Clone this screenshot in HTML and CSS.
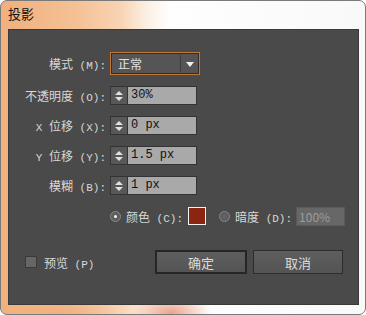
FILE: index.html
```html
<!DOCTYPE html>
<html lang="zh-CN">
<head>
    <meta charset="UTF-8">
    <title>投影</title>
    <link rel="stylesheet" href="styles.css">
</head>
<body>
    <div class="window">
        <div class="titlebar">投影</div>
        <div class="panel">
            <div class="form">
                <label class="label">模式<span class="key"> (M):</span></label>
                <div class="select">
                    <span class="select-value">正常</span>
                    <span class="select-arrow"></span>
                </div>

                <label class="label">不透明度<span class="key"> (O):</span></label>
                <div class="spin">
                    <span class="spin-btn"><i class="up"></i><i class="down"></i></span>
                    <span class="spin-value">30%</span>
                </div>

                <label class="label"><span class="key">X </span>位移<span class="key"> (X):</span></label>
                <div class="spin">
                    <span class="spin-btn"><i class="up"></i><i class="down"></i></span>
                    <span class="spin-value">0 px</span>
                </div>

                <label class="label"><span class="key">Y </span>位移<span class="key"> (Y):</span></label>
                <div class="spin">
                    <span class="spin-btn"><i class="up"></i><i class="down"></i></span>
                    <span class="spin-value">1.5 px</span>
                </div>

                <label class="label">模糊<span class="key"> (B):</span></label>
                <div class="spin">
                    <span class="spin-btn"><i class="up"></i><i class="down"></i></span>
                    <span class="spin-value">1 px</span>
                </div>
            </div>

            <div class="shade-row">
                <span class="radio checked"></span>
                <span class="option">颜色<span class="key"> (C):</span></span>
                <span class="swatch"></span>
                <span class="radio"></span>
                <span class="option">暗度<span class="key"> (D):</span></span>
                <span class="dim-input">100%</span>
            </div>

            <div class="footer">
                <span class="checkbox"></span>
                <span class="option">预览<span class="key"> (P)</span></span>
                <button class="btn default">确定</button>
                <button class="btn">取消</button>
            </div>
        </div>
    </div>
</body>
</html>
```

FILE: styles.css
```css
body {
    margin: 0;
    font-family: "Noto Sans CJK SC", "Liberation Sans", sans-serif;
    font-size: 12px;
    background: #ffffff;
}

.window {
    width: 364px;
    height: 313px;
    border: 1px solid #7a7a7a;
    border-radius: 7px;
    display: flex;
    flex-direction: column;
    background:
        radial-gradient(ellipse 40px 20px at 170px 312px, rgba(232, 140, 110, 0.8), rgba(232, 140, 110, 0)),
        radial-gradient(ellipse 60px 14px at 60px 312px, rgba(240, 170, 120, 0.7), rgba(240, 170, 120, 0)),
        linear-gradient(90deg, #f1b07e 0%, #f4c094 20%, #f8d4b4 33%, #fcefe4 40%, #fefefe 46%, #f9f9f9 100%);
}

.titlebar {
    height: 28px;
    padding-left: 7px;
    line-height: 26px;
    font-size: 13px;
    color: #111;
}

.panel {
    margin: 0 6px 0 7px;
    height: 274px;
    background-color: #4a4a4a;
    border: 1px solid #3a3a3a;
    color: #d8d8d8;
}

/* half-width latin parts of the labels */
.key {
    font-family: "Liberation Mono", monospace;
    font-size: 11px;
    white-space: pre;
}

.form {
    display: grid;
    grid-template-columns: 97px auto;
    column-gap: 4px;
    row-gap: 11px;
    padding-top: 22px;
    align-items: center;
    justify-items: start;
}

.label {
    justify-self: end;
    white-space: nowrap;
}

/* Dropdown */
.select {
    width: 86px;
    height: 19px;
    border: 1px solid #c27836;
    box-shadow: inset 0 0 0 1px #3a2a1e;
    background-color: #555;
    display: flex;
    align-items: center;
    padding: 1px;
}

.select-value {
    flex: 1;
    padding-left: 6px;
    color: #e2e2e2;
    border-right: 1px solid #3c3c3c;
    line-height: 17px;
}

.select-arrow {
    width: 17px;
    height: 17px;
    position: relative;
}

.select-arrow::after {
    content: "";
    position: absolute;
    left: 5px;
    top: 7px;
    border-left: 4px solid transparent;
    border-right: 4px solid transparent;
    border-top: 5px solid #f0f0f0;
}

/* Spinner fields */
.spin {
    width: 85px;
    height: 17px;
    border: 1px solid #333;
    display: flex;
}

.spin-btn {
    width: 16px;
    background-color: #585858;
    border-right: 1px solid #333;
    display: flex;
    flex-direction: column;
    align-items: center;
    justify-content: center;
    gap: 2px;
}

.spin-btn i {
    width: 0;
    height: 0;
    border-left: 4px solid transparent;
    border-right: 4px solid transparent;
}

.spin-btn .up {
    border-bottom: 4px solid #e0e0e0;
}

.spin-btn .down {
    border-top: 4px solid #e0e0e0;
}

.spin-value {
    flex: 1;
    background-color: #a9a9a9;
    color: #111;
    padding-left: 3px;
    line-height: 17px;
    font-family: "Liberation Mono", monospace;
    font-size: 12px;
    white-space: pre;
}

/* Colour / darkness row */
.shade-row {
    display: flex;
    align-items: center;
    margin-top: 12px;
    padding-left: 101px;
    height: 18px;
}

.radio {
    width: 9px;
    height: 9px;
    border-radius: 50%;
    border: 1px solid #8a8a8a;
    background: radial-gradient(circle, #666 0%, #555 100%);
    margin-right: 5px;
    position: relative;
}

.radio.checked {
    background-color: #5c5c5c;
}

.radio.checked::after {
    content: "";
    position: absolute;
    left: 3px;
    top: 3px;
    width: 3px;
    height: 3px;
    border-radius: 50%;
    background-color: #f4f4f4;
}

.option {
    white-space: nowrap;
}

.swatch {
    width: 16px;
    height: 16px;
    border: 1px solid #f2f2f2;
    background-color: #8b2411;
    margin-left: 5px;
    margin-right: 13px;
}

.dim-input {
    width: 45px;
    height: 17px;
    margin-left: 4px;
    background-color: #676767;
    border: 1px solid #5a5a5a;
    color: #9c9c9c;
    padding-left: 2px;
    line-height: 17px;
}

/* Footer */
.footer {
    display: flex;
    align-items: center;
    margin-top: 25px;
    padding-left: 16px;
}

.checkbox {
    width: 10px;
    height: 10px;
    border: 1px solid #3a3a3a;
    background-color: #666;
    margin-right: 7px;
}

.btn {
    height: 24px;
    width: 90px;
    border: 1px solid #2c2c2c;
    background: linear-gradient(#5e5e5e, #545454);
    color: #dcdcdc;
    font-family: inherit;
    font-size: 13px;
    padding: 0;
}

.btn.default {
    width: 92px;
    margin-left: auto;
    margin-right: 6px;
    border: 2px solid #262626;
}

.btn + .btn {
    margin-right: 15px;
}
```
